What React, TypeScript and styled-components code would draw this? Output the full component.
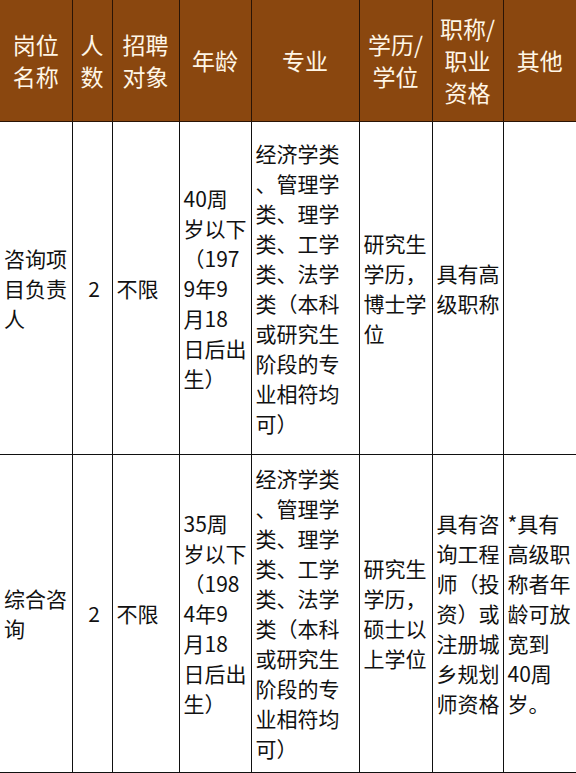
import styled, { createGlobalStyle } from 'styled-components';

const GlobalStyle = createGlobalStyle`
  html, body {
    margin: 0;
    padding: 0;
    background: #ffffff;
  }
`;

const Table = styled.table`
  width: 576px;
  border-collapse: collapse;
  table-layout: fixed;
  font-family: "Noto Sans CJK SC", "Microsoft YaHei", sans-serif;
`;

const HeadRow = styled.tr`
  height: 121px;
  background: #8a470f;
`;

const BodyRow = styled.tr<{ h: number }>`
  height: ${p => p.h}px;
`;

const HeadCell = styled.th`
  border: 1px solid #2a1405;
  border-top: none;
  color: #fff6e6;
  font-size: 23px;
  font-weight: 400;
  line-height: 32px;
  text-align: center;
  vertical-align: middle;
  white-space: pre;
  padding: 0;

  &:first-child {
    border-left: none;
  }
  &:last-child {
    border-right: none;
  }
`;

const Cell = styled.td<{ center?: boolean }>`
  border: 1px solid #111111;
  color: #111111;
  font-size: 21px;
  line-height: 30px;
  text-align: ${p => (p.center ? 'center' : 'left')};
  vertical-align: middle;
  white-space: pre;
  padding: 0 0 0 4px;
  overflow: hidden;

  &:first-child {
    border-left: none;
  }
  &:last-child {
    border-right: none;
  }
`;

const columns = [
  { title: '岗位\n名称', width: 72 },
  { title: '人\n数', width: 40 },
  { title: '招聘\n对象', width: 67 },
  { title: '年龄', width: 72 },
  { title: '专业', width: 108 },
  { title: '学历/\n学位', width: 73 },
  { title: '职称/\n职业\n资格', width: 71 },
  { title: '其他', width: 73 },
];

const major = '经济学类\n、管理学\n类、理学\n类、工学\n类、法学\n类（本科\n或研究生\n阶段的专\n业相符均\n可）';

const rows = [
  {
    height: 333,
    cells: [
      '咨询项\n目负责\n人',
      '2',
      '不限',
      '40周\n岁以下\n（197\n9年9\n月18\n日后出\n生）',
      major,
      '研究生\n学历，\n博士学\n位',
      '具有高\n级职称',
      '',
    ],
  },
  {
    height: 318,
    cells: [
      '综合咨\n询',
      '2',
      '不限',
      '35周\n岁以下\n（198\n4年9\n月18\n日后出\n生）',
      major,
      '研究生\n学历，\n硕士以\n上学位',
      '具有咨\n询工程\n师（投\n资）或\n注册城\n乡规划\n师资格',
      '*具有\n高级职\n称者年\n龄可放\n宽到\n40周\n岁。',
    ],
  },
];

export default function App() {
  return (
    <>
      <GlobalStyle />
      <Table>
        <colgroup>
          {columns.map(c => (
            <col key={c.title} style={{ width: c.width }} />
          ))}
        </colgroup>
        <thead>
          <HeadRow>
            {columns.map(c => (
              <HeadCell key={c.title}>{c.title}</HeadCell>
            ))}
          </HeadRow>
        </thead>
        <tbody>
          {rows.map((r, i) => (
            <BodyRow key={i} h={r.height}>
              {r.cells.map((text, j) => (
                <Cell key={j} center={j === 1}>
                  {text}
                </Cell>
              ))}
            </BodyRow>
          ))}
        </tbody>
      </Table>
    </>
  );
}
